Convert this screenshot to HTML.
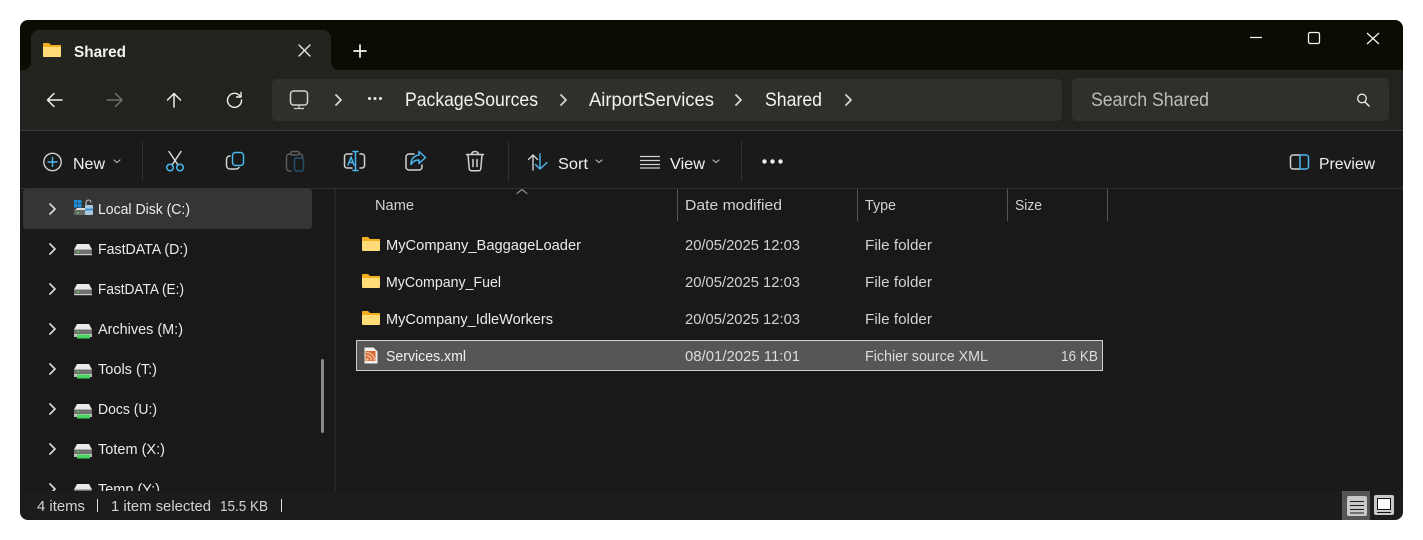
<!DOCTYPE html>
<html><head><meta charset="utf-8"><title>Shared</title>
<style>
html,body{margin:0;padding:0;background:#fff;width:1423px;height:540px;overflow:hidden}
svg{display:block}
text{font-family:"Liberation Sans",sans-serif;font-size:15px;fill:#ebebeb}
.bc{font-size:19.500px;fill:#f2f2f2}
.tb{font-size:16px;fill:#f0f0f0}
.st{font-size:15px;fill:#d2d2d2}
.hd{font-size:15px;fill:#d2d2d2}
.ln{fill:none;stroke-linecap:round;stroke-linejoin:round}
</style></head><body>
<svg width="1423" height="540" viewBox="0 0 1423 540" xmlns="http://www.w3.org/2000/svg">
<defs>
<clipPath id="win"><rect x="20" y="20" width="1383" height="500" rx="8"/></clipPath>
<clipPath id="nav"><rect x="20" y="189" width="320" height="302"/></clipPath>
<g id="folder"><path d="M0 2a1 1 0 0 1 1-1h5l2 2h10v3H0z" fill="#f2b01e"/><path d="M0 5h17a1 1 0 0 1 1 1v8a1 1 0 0 1-1 1H1a1 1 0 0 1-1-1z" fill="#ffdc78"/></g>
<g id="chev"><path d="M-3-5 2 0-3 5" class="ln" stroke="#d6d6d6" stroke-width="1.800"/></g>
<g id="disk"><path d="M3 0h12l3 5.500H0z" fill="#e8e8e8"/><rect y="5.500" width="18" height="5.500" fill="#707070"/><rect y="10" width="18" height="1.200" fill="#cfcfcf"/><rect x="3" y="7" width="2" height="1.500" fill="#46d160"/></g>
<g id="diskg"><use href="#disk"/><rect y="11" width="18" height="2" fill="#bdbdbd"/><rect x="3" y="10.500" width="13" height="4" fill="#44d35f"/></g>
</defs>
<g clip-path="url(#win)">
<rect x="20" y="20" width="1383" height="50" fill="#0b0c02"/>
<rect x="20" y="70" width="1383" height="60" fill="#22231e"/>
<rect x="20" y="130" width="1383" height="1" fill="#3a3a38"/>
<rect x="20" y="131" width="1383" height="57" fill="#1a1a1a"/>
<rect x="20" y="188" width="1383" height="1" fill="#303030"/>
<rect x="20" y="189" width="1383" height="302" fill="#191919"/>
<rect x="20" y="491" width="1383" height="29" fill="#1c1c1c"/>

<!-- tab -->
<path d="M20 70h3a8 8 0 0 0 8-8V38a8 8 0 0 1 8-8h284a8 8 0 0 1 8 8v24a8 8 0 0 0 8 8h3z" fill="#23241e"/>
<use href="#folder" x="43" y="42"/>
<text x="74" y="57" textLength="52" lengthAdjust="spacingAndGlyphs" style="font-size:16px;fill:#f2f2f2;font-weight:bold">Shared</text>
<path d="M299 45 310 56M310 45 299 56" class="ln" stroke="#e6e6e6" stroke-width="1.400"/>
<path d="M360 45v12M354 51h12" class="ln" stroke="#f4f4f4" stroke-width="1.700"/>

<!-- window controls -->
<path d="M1250 37.500h12" stroke="#f2f2f2" stroke-width="1.200"/>
<rect x="1308.500" y="32.500" width="11" height="11" rx="1.500" fill="none" stroke="#f2f2f2" stroke-width="1.300"/>
<path d="M1367 33 1379 44M1379 33 1367 44" stroke="#f2f2f2" stroke-width="1.300"/>

<!-- nav buttons -->
<path d="M62 100H48M54 93.500 47.500 100 54 106.500" class="ln" stroke="#eeeeee" stroke-width="1.500"/>
<path d="M107 100H122M115.500 93.500 122 100 115.500 106.500" class="ln" stroke="#707070" stroke-width="1.500"/>
<path d="M174 107V94M167.500 100 174 93.500 180.500 100" class="ln" stroke="#eeeeee" stroke-width="1.500"/>
<path d="M240 96a7 7 0 1 0 1.500 4M241 92.500V97H236.500" class="ln" stroke="#eeeeee" stroke-width="1.400"/>

<!-- address -->
<rect x="272" y="79" width="790" height="42" rx="5" fill="#2f302a"/>
<rect x="1072" y="78" width="317" height="43" rx="5" fill="#2f302a"/>
<rect x="290.500" y="91" width="17" height="14" rx="3" fill="none" stroke="#d2d2d2" stroke-width="1.500"/>
<path d="M299 105v3M294 108.500h10" stroke="#d2d2d2" stroke-width="1.200"/>
<use href="#chev" x="339" y="100"/>
<circle cx="369.500" cy="98.500" r="1.500" fill="#ececec"/><circle cx="375" cy="98.500" r="1.500" fill="#ececec"/><circle cx="380.500" cy="98.500" r="1.500" fill="#ececec"/>
<text x="405" y="106" class="bc" textLength="133" lengthAdjust="spacingAndGlyphs">PackageSources</text>
<use href="#chev" x="564" y="100"/>
<text x="589" y="106" class="bc" textLength="125" lengthAdjust="spacingAndGlyphs">AirportServices</text>
<use href="#chev" x="739" y="100"/>
<text x="765" y="106" class="bc" textLength="57" lengthAdjust="spacingAndGlyphs">Shared</text>
<use href="#chev" x="849" y="100"/>
<text x="1091" y="106" class="bc" textLength="118" lengthAdjust="spacingAndGlyphs" style="fill:#bdbdbd">Search Shared</text>
<circle cx="1362" cy="98.500" r="4.300" fill="none" stroke="#ececec" stroke-width="1.300"/>
<path d="M1365 102 1369 106" class="ln" stroke="#ececec" stroke-width="1.500"/>

<!-- toolbar -->
<circle cx="52.500" cy="162" r="8.700" fill="none" stroke="#d2d2d2" stroke-width="1.400"/>
<path d="M52.500 157.500v9M48 162h9" class="ln" stroke="#4db5ee" stroke-width="1.400"/>
<text x="73" y="169" class="tb" textLength="32" lengthAdjust="spacingAndGlyphs">New</text>
<path d="M114 160l3 2.500 3-2.500" class="ln" stroke="#c0c0c0" stroke-width="1.100"/>
<rect x="142" y="141" width="1" height="40" fill="#303030"/>

<g class="ln" stroke-width="1.500">
<path d="M169 151.500 178 165M181 151.500 172 165" stroke="#d8d8d8"/>
<circle cx="170" cy="167.500" r="3.300" stroke="#4db5ee"/><circle cx="180" cy="167.500" r="3.300" stroke="#4db5ee"/>

<rect x="232.500" y="152.500" width="11" height="13" rx="3" stroke="#4db5ee"/>
<path d="M230 156a3.500 3.500 0 0 0-3.500 3.500v6a3.500 3.500 0 0 0 3.500 3.500h6a3.500 3.500 0 0 0 3-1.500" stroke="#d2d2d2"/>

<path d="M291 154h-1.500a3 3 0 0 0-3 3v11a3 3 0 0 0 3 3h1.500M299 154h1.500a2 2 0 0 1 2 2v2" stroke="#5c5c5c"/>
<rect x="291" y="151.500" width="8" height="3.500" rx="1.200" stroke="#5c5c5c"/>
<rect x="294.500" y="158" width="9" height="13" rx="2" stroke="#24506b"/>

<path d="M352 154h-5a2.500 2.500 0 0 0-2.500 2.500v9a2.500 2.500 0 0 0 2.500 2.500h5M360 154h2a2.500 2.500 0 0 1 2.500 2.500v9a2.500 2.500 0 0 1-2.500 2.500h-2" stroke="#d2d2d2"/>
<path d="M355.500 151.500v19M353 151.500h5M353 170.500h5" stroke="#4db5ee"/>
<path d="M348 165 351 157 354 165M349 162.500h4" stroke="#4db5ee"/>

<path d="M414 154h-5a3 3 0 0 0-3 3v10a3 3 0 0 0 3 3h10a3 3 0 0 0 3-3v-2" stroke="#d2d2d2"/>
<path d="M419 151.500 425.500 157.500 419 163.500V160c-4 0-6 1.500-8 4.500 0-5.500 3-9 8-9.500z" stroke="#4db5ee"/>

<path d="M466.500 154.500h17M468 155l1.200 13.500a2.500 2.500 0 0 0 2.500 2.300h6.600a2.500 2.500 0 0 0 2.500-2.300L482 155M471.500 154.500c.3-2 1.500-3 3.500-3s3.200 1 3.500 3M473 159.500v7M477 159.500v7" stroke="#d2d2d2"/>
</g>
<rect x="508" y="141" width="1" height="40" fill="#303030"/>

<path d="M533 170V155M528.500 159.500 533 155 537.500 159.500" class="ln" stroke="#d2d2d2" stroke-width="1.400"/>
<path d="M540 154V169M535.500 164.500 540 169 547 162.500" class="ln" stroke="#4db5ee" stroke-width="1.400"/>
<text x="558" y="169" class="tb" textLength="30" lengthAdjust="spacingAndGlyphs">Sort</text>
<path d="M596 160l3 2.500 3-2.500" class="ln" stroke="#c0c0c0" stroke-width="1.100"/>
<path d="M640 156.500h20M640 160.500h20M640 164.500h20M640 168h20" stroke="#d2d2d2" stroke-width="1.300"/>
<text x="670" y="169" class="tb" textLength="35" lengthAdjust="spacingAndGlyphs">View</text>
<path d="M713 160l3 2.500 3-2.500" class="ln" stroke="#c0c0c0" stroke-width="1.100"/>
<rect x="741" y="141" width="1" height="40" fill="#303030"/>
<circle cx="764.500" cy="161.500" r="2.200" fill="#f0f0f0"/><circle cx="772.500" cy="161.500" r="2.200" fill="#f0f0f0"/><circle cx="780.500" cy="161.500" r="2.200" fill="#f0f0f0"/>

<path d="M1300 155h-7a2.500 2.500 0 0 0-2.500 2.500v9a2.500 2.500 0 0 0 2.500 2.500h7" fill="none" stroke="#d2d2d2" stroke-width="1.500"/>
<path d="M1300 155h6a2.500 2.500 0 0 1 2.500 2.500v9a2.500 2.500 0 0 1-2.500 2.500h-6z" fill="none" stroke="#4db5ee" stroke-width="1.500"/>
<text x="1319" y="169" class="tb" textLength="56" lengthAdjust="spacingAndGlyphs">Preview</text>

<!-- nav pane -->
<rect x="23" y="189" width="289" height="40" rx="3" fill="#353535"/>
<rect x="334" y="189" width="2" height="302" fill="#232323"/>
<rect x="321" y="359" width="3" height="74" rx="1.500" fill="#8a8a8a"/>
<g clip-path="url(#nav)">
<use href="#chev" x="53" y="209"/>
<g transform="translate(74 200)">
<rect width="3.500" height="3.500" y="0" fill="#1c8fe0"/><rect x="4" width="3.500" height="3.500" fill="#1c8fe0"/><rect y="4" width="3.500" height="3.500" fill="#1c8fe0"/><rect x="4" y="4" width="3.500" height="3.500" fill="#1c8fe0"/>
<path d="M3 8h15v3H0z" fill="#dcdcdc"/><rect y="10" width="18" height="5" fill="#666"/><rect x="3" y="12" width="2" height="1.500" fill="#46d160"/>
<path d="M12 5V2.500a2.500 2.500 0 0 1 5 0" fill="none" stroke="#c8c8c8" stroke-width="1.100"/>
<rect x="11" y="5" width="8" height="10" rx="1" fill="#a8c8dc"/><rect x="11" y="8.500" width="8" height="2" fill="#3c93d0"/>
</g>
<text x="98" y="214" textLength="92" lengthAdjust="spacingAndGlyphs">Local Disk (C:)</text>

<use href="#chev" x="53" y="249"/><use href="#disk" x="74" y="244"/>
<text x="98" y="254" textLength="90" lengthAdjust="spacingAndGlyphs">FastDATA (D:)</text>
<use href="#chev" x="53" y="289"/><use href="#disk" x="74" y="284"/>
<text x="98" y="294" textLength="86" lengthAdjust="spacingAndGlyphs">FastDATA (E:)</text>
<use href="#chev" x="53" y="329"/><use href="#diskg" x="74" y="324"/>
<text x="98" y="334" textLength="85" lengthAdjust="spacingAndGlyphs">Archives (M:)</text>
<use href="#chev" x="53" y="369"/><use href="#diskg" x="74" y="364"/>
<text x="98" y="374" textLength="59" lengthAdjust="spacingAndGlyphs">Tools (T:)</text>
<use href="#chev" x="53" y="409"/><use href="#diskg" x="74" y="404"/>
<text x="98" y="414" textLength="59" lengthAdjust="spacingAndGlyphs">Docs (U:)</text>
<use href="#chev" x="53" y="449"/><use href="#diskg" x="74" y="444"/>
<text x="98" y="454" textLength="67" lengthAdjust="spacingAndGlyphs">Totem (X:)</text>
<use href="#chev" x="53" y="489"/><use href="#diskg" x="74" y="484"/>
<text x="98" y="494" textLength="62" lengthAdjust="spacingAndGlyphs">Temp (Y:)</text>
</g>

<!-- header -->
<path d="M517 193.500 522 189.500 527 193.500" class="ln" stroke="#a8a8a8" stroke-width="1"/>
<text x="375" y="210" class="hd" textLength="39" lengthAdjust="spacingAndGlyphs">Name</text>
<text x="685" y="210" class="hd" textLength="97" lengthAdjust="spacingAndGlyphs">Date modified</text>
<text x="865" y="210" class="hd" textLength="31" lengthAdjust="spacingAndGlyphs">Type</text>
<text x="1015" y="210" class="hd" textLength="27" lengthAdjust="spacingAndGlyphs">Size</text>
<rect x="677" y="189" width="1" height="32" fill="#555"/>
<rect x="857" y="189" width="1" height="32" fill="#555"/>
<rect x="1007" y="189" width="1" height="32" fill="#555"/>
<rect x="1107" y="189" width="1" height="32" fill="#555"/>

<!-- rows -->
<rect x="356.500" y="340.500" width="746" height="30" fill="#565656" stroke="#cfcfcf" stroke-width="1"/>
<use href="#folder" x="362" y="236"/>
<text x="386" y="250" textLength="195" lengthAdjust="spacingAndGlyphs">MyCompany_BaggageLoader</text>
<text x="685" y="250" class="st" textLength="115" lengthAdjust="spacingAndGlyphs">20/05/2025 12:03</text>
<text x="865" y="250" class="st" textLength="67" lengthAdjust="spacingAndGlyphs">File folder</text>
<use href="#folder" x="362" y="273"/>
<text x="386" y="287" textLength="115" lengthAdjust="spacingAndGlyphs">MyCompany_Fuel</text>
<text x="685" y="287" class="st" textLength="115" lengthAdjust="spacingAndGlyphs">20/05/2025 12:03</text>
<text x="865" y="287" class="st" textLength="67" lengthAdjust="spacingAndGlyphs">File folder</text>
<use href="#folder" x="362" y="310"/>
<text x="386" y="324" textLength="167" lengthAdjust="spacingAndGlyphs">MyCompany_IdleWorkers</text>
<text x="685" y="324" class="st" textLength="115" lengthAdjust="spacingAndGlyphs">20/05/2025 12:03</text>
<text x="865" y="324" class="st" textLength="67" lengthAdjust="spacingAndGlyphs">File folder</text>
<path d="M364.500 347.500h9l4 4v12h-13z" fill="#efefef"/>
<rect x="365.500" y="351" width="10" height="10" fill="#d9692c"/>
<path d="M366.500 352.500a8 8 0 0 1 8 8M366.500 355.500a5 5 0 0 1 5 5" fill="none" stroke="#f8d9c4" stroke-width="1"/>
<circle cx="367.500" cy="359.500" r="1.100" fill="#f8d9c4"/>
<text x="386" y="361" textLength="80" lengthAdjust="spacingAndGlyphs" style="fill:#f0f0f0">Services.xml</text>
<text x="685" y="361" class="st" textLength="115" lengthAdjust="spacingAndGlyphs" style="fill:#dcdcdc">08/01/2025 11:01</text>
<text x="865" y="361" class="st" textLength="123" lengthAdjust="spacingAndGlyphs" style="fill:#dcdcdc">Fichier source XML</text>
<text x="1061" y="361" class="st" textLength="37" lengthAdjust="spacingAndGlyphs" style="fill:#dcdcdc">16 KB</text>

<!-- status -->
<text x="37" y="511" class="st" textLength="48" lengthAdjust="spacingAndGlyphs">4 items</text>
<rect x="97" y="499" width="1" height="13" fill="#e0e0e0"/>
<text x="111" y="511" class="st" textLength="100" lengthAdjust="spacingAndGlyphs">1 item selected</text>
<text x="220" y="511" class="st" textLength="48" lengthAdjust="spacingAndGlyphs">15.5 KB</text>
<rect x="281" y="499" width="1" height="13" fill="#e0e0e0"/>

<rect x="1342" y="491" width="28" height="29" fill="#555"/>
<rect x="1347" y="496" width="20" height="20" rx="2" fill="#c8c8c8"/>
<path d="M1350 501.500h14M1350 505.500h14M1350 509.500h14M1350 513h14" stroke="#1c1c1c" stroke-width="1.100"/>
<rect x="1374" y="495" width="20" height="20" rx="2" fill="#c8c8c8"/>
<rect x="1377.500" y="498.500" width="13" height="11" fill="#fff" stroke="#111" stroke-width="1"/>
<path d="M1377 512.500h14" stroke="#111" stroke-width="1"/>
</g>
</svg>
</body></html>
